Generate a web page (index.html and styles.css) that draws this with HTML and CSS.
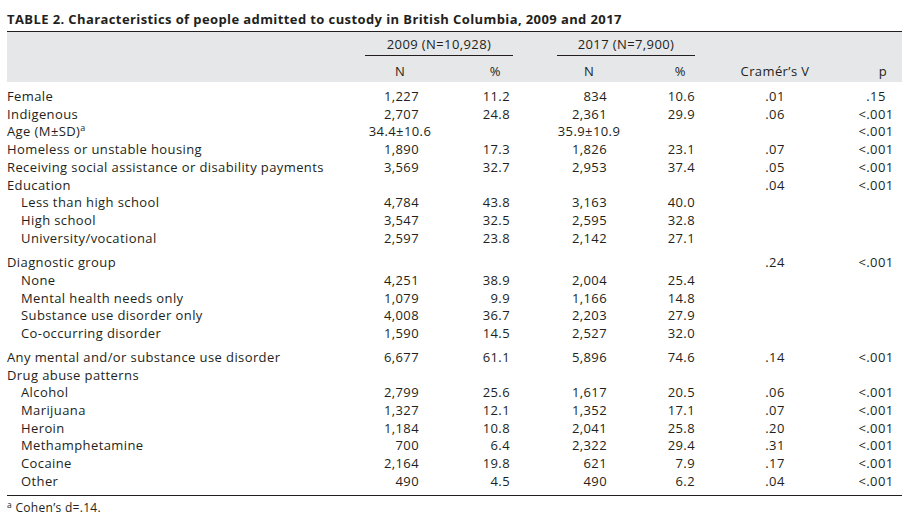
FILE: index.html
```html
<!DOCTYPE html>
<html lang="en">
<head>
<meta charset="utf-8">
<title>Table 2</title>
<link rel="stylesheet" href="styles.css">
</head>
<body>
<div class="page">
  <h1 class="title">TABLE 2. Characteristics of people admitted to custody in British Columbia, 2009 and 2017</h1>
  <table class="data">
    <colgroup>
      <col class="c-label"><col class="c-n09"><col class="c-p09"><col class="c-gap"><col class="c-n17"><col class="c-p17"><col class="c-cv"><col class="c-pv">
    </colgroup>
    <thead>
      <tr class="hr1">
        <th></th>
        <th colspan="2" class="grp">2009 (N=10,928)</th>
        <th></th>
        <th colspan="2" class="grp">2017 (N=7,900)</th>
        <th></th>
        <th></th>
      </tr>
      <tr class="hr2">
        <th></th>
        <th class="h-n">N</th>
        <th class="h-pct09">%</th>
        <th></th>
        <th class="h-n">N</th>
        <th class="h-pct17">%</th>
        <th class="h-cv">Cramér’s V</th>
        <th class="h-p">p</th>
      </tr>
    </thead>
    <tbody>
      <tr class="first"><td class="lbl">Female</td><td class="n09">1,227</td><td class="p09">11.2</td><td></td><td class="n17">834</td><td class="p17">10.6</td><td class="cv">.01</td><td class="pv">.15</td></tr>
      <tr><td class="lbl">Indigenous</td><td class="n09">2,707</td><td class="p09">24.8</td><td></td><td class="n17">2,361</td><td class="p17">29.9</td><td class="cv">.06</td><td class="pv">&lt;.001</td></tr>
      <tr><td class="lbl">Age (M±SD)<sup>a</sup></td><td class="ctr09" colspan="2"><span class="age09">34.4±10.6</span></td><td></td><td class="ctr17" colspan="2"><span class="age17">35.9±10.9</span></td><td class="cv"></td><td class="pv">&lt;.001</td></tr>
      <tr><td class="lbl">Homeless or unstable housing</td><td class="n09">1,890</td><td class="p09">17.3</td><td></td><td class="n17">1,826</td><td class="p17">23.1</td><td class="cv">.07</td><td class="pv">&lt;.001</td></tr>
      <tr><td class="lbl">Receiving social assistance or disability payments</td><td class="n09">3,569</td><td class="p09">32.7</td><td></td><td class="n17">2,953</td><td class="p17">37.4</td><td class="cv">.05</td><td class="pv">&lt;.001</td></tr>
      <tr><td class="lbl">Education</td><td class="n09"></td><td class="p09"></td><td></td><td class="n17"></td><td class="p17"></td><td class="cv">.04</td><td class="pv">&lt;.001</td></tr>
      <tr><td class="lbl sub">Less than high school</td><td class="n09">4,784</td><td class="p09">43.8</td><td></td><td class="n17">3,163</td><td class="p17">40.0</td><td class="cv"></td><td class="pv"></td></tr>
      <tr><td class="lbl sub">High school</td><td class="n09">3,547</td><td class="p09">32.5</td><td></td><td class="n17">2,595</td><td class="p17">32.8</td><td class="cv"></td><td class="pv"></td></tr>
      <tr><td class="lbl sub">University/vocational</td><td class="n09">2,597</td><td class="p09">23.8</td><td></td><td class="n17">2,142</td><td class="p17">27.1</td><td class="cv"></td><td class="pv"></td></tr>
      <tr class="gap8"><td class="lbl">Diagnostic group</td><td class="n09"></td><td class="p09"></td><td></td><td class="n17"></td><td class="p17"></td><td class="cv">.24</td><td class="pv">&lt;.001</td></tr>
      <tr><td class="lbl sub">None</td><td class="n09">4,251</td><td class="p09">38.9</td><td></td><td class="n17">2,004</td><td class="p17">25.4</td><td class="cv"></td><td class="pv"></td></tr>
      <tr><td class="lbl sub">Mental health needs only</td><td class="n09">1,079</td><td class="p09">9.9</td><td></td><td class="n17">1,166</td><td class="p17">14.8</td><td class="cv"></td><td class="pv"></td></tr>
      <tr><td class="lbl sub">Substance use disorder only</td><td class="n09">4,008</td><td class="p09">36.7</td><td></td><td class="n17">2,203</td><td class="p17">27.9</td><td class="cv"></td><td class="pv"></td></tr>
      <tr><td class="lbl sub">Co-occurring disorder</td><td class="n09">1,590</td><td class="p09">14.5</td><td></td><td class="n17">2,527</td><td class="p17">32.0</td><td class="cv"></td><td class="pv"></td></tr>
      <tr class="gap6"><td class="lbl">Any mental and/or substance use disorder</td><td class="n09">6,677</td><td class="p09">61.1</td><td></td><td class="n17">5,896</td><td class="p17">74.6</td><td class="cv">.14</td><td class="pv">&lt;.001</td></tr>
      <tr><td class="lbl">Drug abuse patterns</td><td class="n09"></td><td class="p09"></td><td></td><td class="n17"></td><td class="p17"></td><td class="cv"></td><td class="pv"></td></tr>
      <tr><td class="lbl sub">Alcohol</td><td class="n09">2,799</td><td class="p09">25.6</td><td></td><td class="n17">1,617</td><td class="p17">20.5</td><td class="cv">.06</td><td class="pv">&lt;.001</td></tr>
      <tr><td class="lbl sub">Marijuana</td><td class="n09">1,327</td><td class="p09">12.1</td><td></td><td class="n17">1,352</td><td class="p17">17.1</td><td class="cv">.07</td><td class="pv">&lt;.001</td></tr>
      <tr><td class="lbl sub">Heroin</td><td class="n09">1,184</td><td class="p09">10.8</td><td></td><td class="n17">2,041</td><td class="p17">25.8</td><td class="cv">.20</td><td class="pv">&lt;.001</td></tr>
      <tr><td class="lbl sub">Methamphetamine</td><td class="n09">700</td><td class="p09">6.4</td><td></td><td class="n17">2,322</td><td class="p17">29.4</td><td class="cv">.31</td><td class="pv">&lt;.001</td></tr>
      <tr><td class="lbl sub">Cocaine</td><td class="n09">2,164</td><td class="p09">19.8</td><td></td><td class="n17">621</td><td class="p17">7.9</td><td class="cv">.17</td><td class="pv">&lt;.001</td></tr>
      <tr class="last"><td class="lbl sub">Other</td><td class="n09">490</td><td class="p09">4.5</td><td></td><td class="n17">490</td><td class="p17">6.2</td><td class="cv">.04</td><td class="pv">&lt;.001</td></tr>
    </tbody>
  </table>
  <p class="foot"><sup>a</sup> Cohen’s d=.14.</p>
</div>
</body>
</html>
```

FILE: styles.css
```css
html, body {
  margin: 0;
  padding: 0;
  background: #ffffff;
}

body {
  font-family: "Open Sans", Lato, "Liberation Sans", sans-serif;
  color: #231f20;
}

.page {
  padding: 9px 12px 0 7px;
}

.title {
  margin: 0;
  font-size: 13px;
  line-height: 20px;
  font-weight: 700;
  letter-spacing: 0.4px;
  height: 22px;
}

.data {
  width: 895px;
  table-layout: fixed;
  border-collapse: collapse;
  border-top: 1px solid #231f20;
  border-bottom: 1.5px solid #231f20;
  font-size: 13px;
  letter-spacing: 0.4px;
}

.c-label { width: 358px; }
.c-n09 { width: 70px; }
.c-p09 { width: 78px; }
.c-gap { width: 44px; }
.c-n17 { width: 64px; }
.c-p17 { width: 74px; }
.c-cv { width: 160px; }
.c-pv { width: 47px; }

thead tr {
  background: #e6e7e8;
}

th {
  font-weight: 400;
  padding: 0;
  white-space: nowrap;
}

.hr1 th {
  padding-top: 1px;
  line-height: 22px;
}

.hr1 th.grp {
  border-bottom: 1px solid #231f20;
  text-align: center;
}

.hr2 th {
  padding-top: 7px;
  padding-bottom: 2px;
  line-height: 17px;
}

.h-n { text-align: center; }
.hr2 .h-pct09 { text-align: right; padding-right: 12px; }
.hr2 .h-pct17 { text-align: right; padding-right: 9px; }
.h-cv { text-align: center; }
.hr2 .h-p { text-align: right; padding-right: 15px; }

td {
  padding: 0;
  line-height: 17.7px;
  white-space: nowrap;
  vertical-align: bottom;
}

.first td { padding-top: 6px; }
.gap8 td { padding-top: 7px; }
.gap6 td { padding-top: 6px; }
.last td { padding-bottom: 5px; }

.lbl { text-align: left; }
.lbl.sub { padding-left: 14px; }

.n09 { text-align: right; padding-right: 16px; }
.p09 { text-align: right; padding-right: 3px; }
.n17 { text-align: right; padding-right: 14px; }
.p17 { text-align: right; padding-right: 0; }
.cv { text-align: center; }
.pv { text-align: center; padding-right: 5px; }

.ctr09, .ctr17 {
  text-align: left;
}

.age09 {
  display: inline-block;
  width: 70px;
  text-align: center;
}

.age17 {
  display: inline-block;
  width: 64px;
  text-align: center;
}

sup {
  font-size: 9px;
  line-height: 0;
  vertical-align: 5px;
}

.foot {
  margin: 0;
  padding-top: 4px;
  font-size: 12px;
  line-height: 16px;
  letter-spacing: 0.3px;
}

.foot sup {
  font-size: 8.5px;
  vertical-align: 4px;
}
```
